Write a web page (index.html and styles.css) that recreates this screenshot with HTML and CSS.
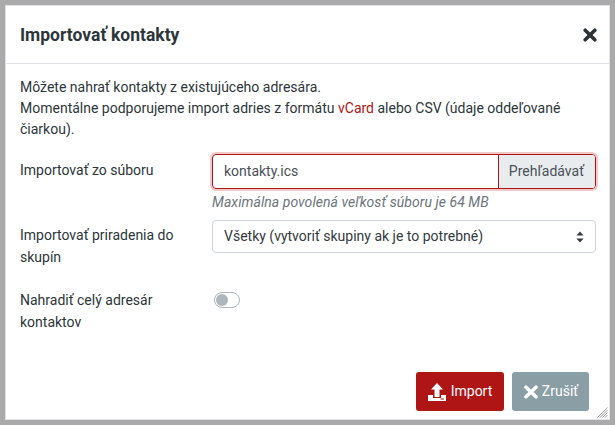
FILE: index.html
```html
<!DOCTYPE html>
<html lang="sk">
<head>
    <meta charset="UTF-8">
    <title>Importovať kontakty</title>
    <link rel="stylesheet" href="styles.css">
</head>
<body>
    <div class="dialog">
        <div class="dialog-head">
            <h1>Importovať kontakty</h1>
            <svg class="close" width="14" height="14" viewBox="0 0 14 14">
                <path d="M2.2 2.2L11.8 11.8M11.8 2.2L2.2 11.8" stroke="#2c3338" stroke-width="3.6" stroke-linecap="round"/>
            </svg>
        </div>
        <div class="dialog-body">
            <p class="intro">Môžete nahrať kontakty z existujúceho adresára.<br>Momentálne podporujeme import adries z formátu <span class="link">vCard</span> alebo CSV (údaje oddeľované čiarkou).</p>
            <div class="row row-file">
                <div class="label">Importovať zo súboru</div>
                <div class="field">
                    <div class="file">
                        <span class="file-name">kontakty.ics</span>
                        <span class="file-btn">Prehľadávať</span>
                    </div>
                    <div class="hint">Maximálna povolená veľkosť súboru je 64 MB</div>
                </div>
            </div>
            <div class="row row-select">
                <div class="label">Importovať priradenia do skupín</div>
                <div class="field">
                    <div class="select">
                        <span>Všetky (vytvoriť skupiny ak je to potrebné)</span>
                        <svg width="8" height="12" viewBox="0 0 8 12">
                            <path d="M4 0.5L7.6 4.6H0.4Z M4 11.5L0.4 7.4H7.6Z" fill="#343a40"/>
                        </svg>
                    </div>
                </div>
            </div>
            <div class="row row-switch">
                <div class="label">Nahradiť celý adresár kontaktov</div>
                <div class="field">
                    <div class="switch"><i></i></div>
                </div>
            </div>
        </div>
        <div class="dialog-foot">
            <div class="btn btn-import">
                <svg width="18" height="18" viewBox="0 0 18 18">
                    <path d="M9 0L15 6.5H11.5V14H6.5V6.5H3Z" fill="#fff"/>
                    <path d="M0 12H5V15H13V12H18V18H0Z" fill="#fff"/>
                    <path d="M12.5 16H16" stroke="#b01515" stroke-width="1"/>
                </svg>
                <span>Import</span>
            </div>
            <div class="btn btn-cancel">
                <svg width="16" height="14" viewBox="0 0 16 14">
                    <path d="M3 2.2L13 11.8M13 2.2L3 11.8" stroke="#fff" stroke-width="3.6" stroke-linecap="round"/>
                </svg>
                <span>Zrušiť</span>
            </div>
        </div>
        <svg class="grip" width="11" height="11" viewBox="0 0 11 11">
            <path d="M10.5 0.5L0.5 10.5M10.5 3L3 10.5M10.5 5.5L5.5 10.5M10.5 8L8 10.5" stroke="#9a9a9a" stroke-width="1"/>
        </svg>
    </div>
</body>
</html>
```

FILE: styles.css
```css
* {
    margin: 0;
    padding: 0;
    box-sizing: border-box;
}
html, body {
    height: 100%;
}
body {
    background: #aaa;
    padding: 5px;
    font: 14px/21px Roboto, "Liberation Sans", sans-serif;
    color: #2c363a;
}
.dialog {
    height: 100%;
    background: #fff;
    display: flex;
    flex-direction: column;
    position: relative;
    border: 1px solid #dee2e6;
}
.dialog-head {
    height: 58px;
    flex: none;
    padding: 0 12px 0 14px;
    display: flex;
    align-items: center;
    justify-content: space-between;
    border-bottom: 1px solid #dee2e6;
}
.dialog-head h1 {
    font-size: 17.5px;
    font-weight: 700;
    line-height: 26px;
}
.dialog-body {
    flex: 1;
    padding: 13px 13px 0 14px;
}
.intro {
    margin-bottom: 14px;
}
.link {
    color: #b01515;
}
.row {
    display: flex;
    column-gap: 14px;
}
.label {
    width: 178px;
    flex: none;
    line-height: 22px;
    padding-top: 5px;
}
.field {
    flex: 1;
}
.row-file {
    margin-bottom: 7px;
}
.row-select {
    margin-bottom: 15px;
}
.row-select .label {
    padding-top: 4px;
}
.row-switch .label {
    padding-top: 7px;
    line-height: 21.5px;
}
.file {
    height: 35px;
    display: flex;
    border: 1px solid #b01515;
    border-radius: 4px;
    box-shadow: 0 0 0 2px #efc8c8;
    overflow: hidden;
}
.file-name {
    flex: 1;
    padding: 6px 11px;
    color: #495057;
}
.file-btn {
    padding: 6px 11px 6px 10px;
    background: #e9ecef;
    border-left: 1px solid #b01515;
    color: #495057;
}
.hint {
    margin-top: 3px;
    font-style: italic;
    letter-spacing: 0.05px;
    color: #6c757d;
}
.select {
    height: 33px;
    padding: 0 11px 0 11px;
    display: flex;
    align-items: center;
    justify-content: space-between;
    border: 1px solid #ced4da;
    border-radius: 4px;
    color: #343a40;
}
.switch {
    width: 26px;
    height: 16px;
    margin: 9px 0 0 2px;
    padding: 1px;
    border: 1px solid #adb5bd;
    border-radius: 8px;
}
.switch i {
    display: block;
    width: 12px;
    height: 12px;
    border-radius: 50%;
    background: #adb5bd;
}
.dialog-foot {
    flex: none;
    padding: 0 20px 8px 0;
    display: flex;
    justify-content: flex-end;
    column-gap: 8px;
}
.btn {
    height: 39px;
    display: flex;
    align-items: center;
    justify-content: center;
    column-gap: 5px;
    border-radius: 3px;
    color: #fff;
}
.btn-import {
    width: 88px;
    background: #b01515;
}
.btn-cancel {
    width: 77px;
    column-gap: 3px;
    background: #8a9ea5;
}
.grip {
    position: absolute;
    right: 1px;
    bottom: 1px;
}
```
